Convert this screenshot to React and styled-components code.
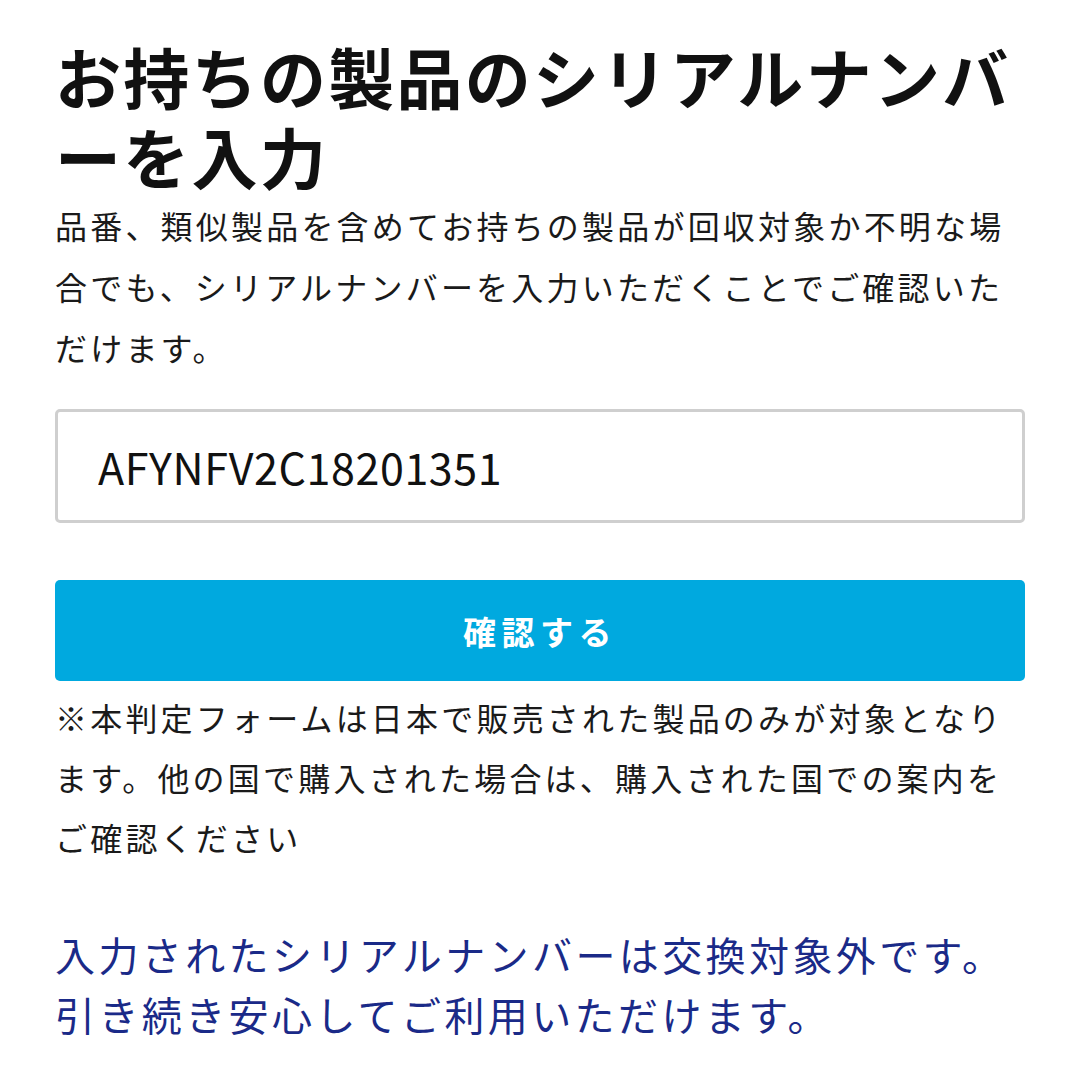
import styled, { createGlobalStyle } from 'styled-components'

const Global = createGlobalStyle`
    body {
        margin:0;
        background:#fff;
        font-family:"Noto Sans CJK JP", "Noto Sans", sans-serif;
    }
`

const Page = styled.main`
    width:1080px;
    height:1080px;
    box-sizing:border-box;
    padding:35px 55px 0 55px;
    overflow:hidden;
    display:flex;
    flex-direction:column;
`

const Title = styled.h1`
    margin:0;
    font-size:66px;
    line-height:80px;
    letter-spacing:2.3px;
    font-weight:700;
    color:#111;
`

const Text = styled.p`
    margin:${p => p.$mt || 0}px 0 0 0;
    font-size:32px;
    line-height:${p => p.$lh || 61}px;
    letter-spacing:3.2px;
    color:#1a1a1a;
`

const Field = styled.input`
    margin-top:31px;
    height:114px;
    box-sizing:border-box;
    width:100%;
    border:3px solid #cfcfcf;
    border-radius:5px;
    padding:0 40px;
    font-family:"Noto Sans CJK JP", sans-serif;
    font-size:43px;
    letter-spacing:0.6px;
    color:#111;
    outline:none;
`

const Button = styled.button`
    margin-top:57px;
    height:101px;
    width:100%;
    border:none;
    border-radius:5px;
    background:#00a9df;
    color:#fff;
    font-family:"Noto Sans CJK JP", sans-serif;
    font-weight:700;
    font-size:33px;
    letter-spacing:5.5px;
`

const Result = styled.p`
    margin:57px 0 0 0;
    font-size:40px;
    line-height:60px;
    letter-spacing:3.4px;
    color:#1a2a88;
`

const App = () => {
    return <Page>
        <Global />
        <Title>お持ちの製品のシリアルナンバーを入力</Title>
        <Text>品番、類似製品を含めてお持ちの製品が回収対象か不明な場合でも、シリアルナンバーを入力いただくことでご確認いただけます。</Text>
        <Field defaultValue="AFYNFV2C18201351" />
        <Button>確認する</Button>
        <Text $mt={6} $lh={60}>※本判定フォームは日本で販売された製品のみが対象となります。他の国で購入された場合は、購入された国での案内をご確認ください</Text>
        <Result>入力されたシリアルナンバーは交換対象外です。<br />引き続き安心してご利用いただけます。</Result>
    </Page>
}

export default App
